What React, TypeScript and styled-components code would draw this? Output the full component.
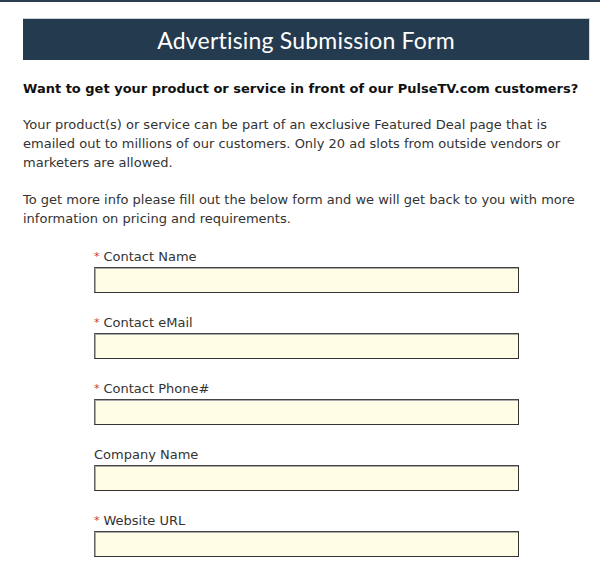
import React from "react";
import styled, { createGlobalStyle } from "styled-components";

const Global = createGlobalStyle`
  html, body { margin: 0; padding: 0; background: #fff; }
  body { font-family: Verdana, "DejaVu Sans", sans-serif; color: #222; }
`;

const TopRule = styled.div`
  height: 2px;
  background: #2b3e52;
`;

const Page = styled.div`
  width: 567px;
  margin: 16px 0 0 23px;
`;

const Banner = styled.h1`
  margin: 0;
  height: 42px;
  background: #243a4f;
  border-top: 1px solid #c9ced6;
  border-right: 1px solid #d4d8de;
  box-sizing: border-box;
  display: flex;
  align-items: center;
  justify-content: center;
  color: #fff;
  font-family: "Lato", "Open Sans", sans-serif;
  font-weight: 400;
  font-size: 23px;
  letter-spacing: 0.2px;
`;

const Lead = styled.p`
  margin: 20px 0 0;
  font-size: 13px;
  font-weight: bold;
  color: #111;
  line-height: 18px;
`;

const Para = styled.p<{ $first?: boolean }>`
  margin: ${(p) => (p.$first ? "18px" : "19px")} 0 0;
  font-size: 13px;
  line-height: 18.75px;
  color: #333;
`;

const Form = styled.form`
  width: 425px;
  margin: 18px auto 0;
  display: flex;
  flex-direction: column;
  gap: 20px;
`;

const Field = styled.div`
  display: flex;
  flex-direction: column;
  gap: 1px;
`;

const Label = styled.label`
  font-size: 13px;
  line-height: 19px;
  color: #333;
`;

const Star = styled.span`
  color: #b5423a;
  font-size: 11px;
  vertical-align: 1px;
  margin-right: 4px;
`;

const Input = styled.input`
  box-sizing: border-box;
  height: 26px;
  width: 100%;
  margin: 0;
  background: #fffde6;
  border: 1px solid #333;
  border-top-color: #444;
  border-left-color: #666;
  box-shadow: inset 1px 1px 0 #aaa;
`;

const fields: { label: string; required: boolean }[] = [
  { label: "Contact Name", required: true },
  { label: "Contact eMail", required: true },
  { label: "Contact Phone#", required: true },
  { label: "Company Name", required: false },
  { label: "Website URL", required: true },
];

export default function App() {
  return (
    <>
      <Global />
      <TopRule />
      <Page>
        <Banner>Advertising Submission Form</Banner>
        <Lead>Want to get your product or service in front of our PulseTV.com customers?</Lead>
        <Para $first>
          Your product(s) or service can be part of an exclusive Featured Deal page that is
          emailed out to millions of our customers. Only 20 ad slots from outside vendors or
          marketers are allowed.
        </Para>
        <Para>
          To get more info please fill out the below form and we will get back to you with more
          information on pricing and requirements.
        </Para>
        <Form onSubmit={(e) => e.preventDefault()}>
          {fields.map((f) => (
            <Field key={f.label}>
              <Label>
                {f.required && <Star>*</Star>}
                {f.label}
              </Label>
              <Input type="text" />
            </Field>
          ))}
        </Form>
      </Page>
    </>
  );
}
